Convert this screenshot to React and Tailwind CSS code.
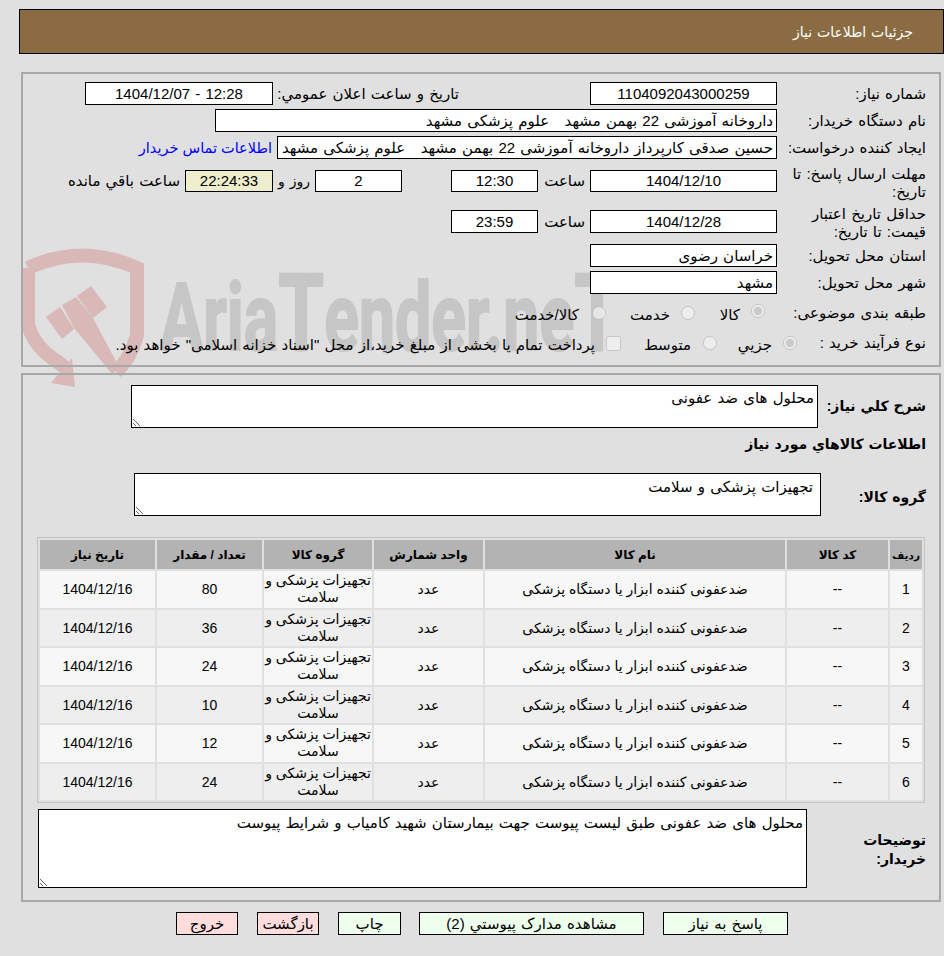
const FONT = "font-['Liberation_Sans','DejaVu_Sans',sans-serif]"

const ROWS = [
  { id: 1, qty: 80 },
  { id: 2, qty: 36 },
  { id: 3, qty: 24 },
  { id: 4, qty: 10 },
  { id: 5, qty: 12 },
  { id: 6, qty: 24 },
]

const COLS = [
  { label: 'ردیف', width: 'w-[32px] text-[10.5px]' },
  { label: 'کد کالا', width: 'w-[101px]' },
  { label: 'نام کالا', width: 'w-[300px]' },
  { label: 'واحد شمارش', width: 'w-[109px]' },
  { label: 'گروه کالا', width: 'w-[108px]' },
  { label: 'تعداد / مقدار', width: 'w-[105px]' },
  { label: 'تاریخ نیاز', width: 'w-[115px]' },
]

function Box({ children, className = 'h-[23px]', bg = 'bg-white', ltr = false }) {
  return (
    <div
      dir={ltr ? 'ltr' : 'rtl'}
      className={`flex shrink-0 items-center overflow-hidden whitespace-pre border border-black px-[3px] ${bg} ${ltr ? 'justify-center' : ''} ${className}`}
    >
      {children}
    </div>
  )
}

function Label({ children, className = 'w-[149px]' }) {
  return <div className={`shrink-0 ${className}`}>{children}</div>
}

function Radio({ checked, name }) {
  return <input type="radio" name={name} checked={checked} disabled readOnly className="m-0 h-[14px] w-[14px] shrink-0" />
}

function Watermark() {
  return (
    <svg className="pointer-events-none absolute left-0 top-[240px] h-[160px] w-[640px] [direction:ltr]" viewBox="0 0 640 160" aria-hidden="true">
      <g fill="none" stroke="#d9b8b8" strokeWidth="14">
        <path d="M28 28 Q 82 3 137 28 L137 95 Q 131 118 116 132" />
        <path d="M28 28 L28 85 Q 35 108 58 122 L 68 130" />
      </g>
      <g fill="#d9b8b8">
        <path d="M51 143 L75 147 L72 118 Z" />
        <path d="M46 77 L60 67 L74 89 L62 99 Z" />
        <path d="M77 56 L91 46 L107 67 L93 78 Z" />
        <path d="M62 65 L76 57 L93 78 L118 125 L113 135 L74 88 Z" />
      </g>
      <text
        x="160"
        y="110"
        textLength="460"
        lengthAdjust="spacingAndGlyphs"
        fontFamily="Roboto, sans-serif"
        fontWeight="700"
        fontSize="94"
        fill="#c6c6c6"
        stroke="#c6c6c6"
        strokeWidth="2"
      >
        Aria<tspan fontSize="108">T</tspan>ender.ne<tspan fontSize="108">T</tspan>
      </text>
    </svg>
  )
}

export default function App() {
  return (
    <div dir="rtl" className={`relative h-[956px] w-[944px] overflow-hidden bg-[#e0e0e0] text-[15px] leading-[18px] text-black [word-spacing:1px] ${FONT}`}>
      <Watermark />

      <div className="ml-[19px] mt-[9px] flex h-[45px] items-center border border-black bg-[#8b6c42] pr-[30px] text-[14px] text-white">
        جزئیات اطلاعات نیاز
      </div>

      <section className="relative z-10 ml-[21px] mr-[3px] mt-[18px] h-[295px] border-2 border-[#a8a8a8] pr-[13px] pt-[8px]">
        <div className="flex h-[27px] items-start">
          <Label><span className="leading-[24px]">شماره نیاز:</span></Label>
          <Box ltr className="h-[23px] w-[187px]">1104092043000259</Box>
          <div className="mr-[131px] w-[186px] shrink-0 whitespace-nowrap leading-[24px]">تاريخ و ساعت اعلان عمومي:</div>
          <Box ltr className="h-[23px] w-[188px]">1404/12/07 - 12:28</Box>
        </div>
        <div className="flex h-[27px] items-start">
          <Label><span className="leading-[24px]">نام دستگاه خریدار:</span></Label>
          <Box className="h-[23px] w-[562px]">داروخانه آموزشی 22 بهمن مشهد   علوم پزشکی مشهد</Box>
        </div>
        <div className="flex h-[34px] items-start">
          <Label><span className="leading-[24px]">ایجاد کننده درخواست:</span></Label>
          <Box className="h-[23px] w-[500px]">حسین صدقی کارپرداز داروخانه آموزشی 22 بهمن مشهد   علوم پزشکی مشهد</Box>
          <a className="mr-[5px] whitespace-nowrap text-[14.5px] leading-[24px] text-[#0000ff] [word-spacing:0]">اطلاعات تماس خریدار</a>
        </div>
        <div className="flex h-[40px] items-start">
          <Label className="-mt-[5px] w-[149px]">مهلت ارسال پاسخ: تا تاریخ:</Label>
          <Box ltr className="h-[22px] w-[187px]">1404/12/10</Box>
          <div className="w-[52px] pr-[5px] leading-[22px]">ساعت</div>
          <Box ltr className="h-[22px] w-[87px]">12:30</Box>
          <div className="w-[49px]" />
          <Box ltr className="h-[22px] w-[87px]">2</Box>
          <div className="w-[42px] whitespace-nowrap pr-[5px] text-[14px] leading-[22px]">روز و</div>
          <Box ltr bg="bg-[#eeeecc]" className="h-[22px] w-[88px]">22:24:33</Box>
          <div className="whitespace-nowrap pr-[5px] leading-[22px]">ساعت باقي مانده</div>
        </div>
        <div className="flex h-[34px] items-start">
          <Label className="-mt-[5px] w-[149px]">حداقل تاریخ اعتبار قیمت: تا تاریخ:</Label>
          <Box ltr className="h-[23px] w-[187px]">1404/12/28</Box>
          <div className="w-[52px] pr-[5px] leading-[23px]">ساعت</div>
          <Box ltr className="h-[23px] w-[87px]">23:59</Box>
        </div>
        <div className="flex h-[27px] items-start">
          <Label><span className="leading-[24px]">استان محل تحویل:</span></Label>
          <Box className="h-[23px] w-[187px]">خراسان رضوی</Box>
        </div>
        <div className="flex h-[27px] items-start">
          <Label><span className="leading-[24px]">شهر محل تحویل:</span></Label>
          <Box className="h-[23px] w-[187px]">مشهد</Box>
        </div>
        <div className="flex h-[30px] items-center">
          <Label>طبقه بندی موضوعی:</Label>
          <div className="mr-[12px]"><Radio name="kind" checked /></div>
          <span className="mr-[11px] w-[45px] pt-[4px]">کالا</span>
          <Radio name="kind" />
          <span className="mr-[11px] w-[64px] pt-[4px]">خدمت</span>
          <Radio name="kind" />
          <span className="mr-[13px] pt-[4px]">کالا/خدمت</span>
        </div>
        <div className="flex h-[30px] items-center">
          <Label className="w-[129px]">نوع فرآیند خرید :</Label>
          <Radio name="process" checked />
          <span className="mr-[11px] w-[55px] pt-[4px]">جزیي</span>
          <Radio name="process" />
          <span className="mr-[12px] w-[70px] pt-[4px]">متوسط</span>
          <input type="checkbox" disabled className="m-0 h-[15px] w-[15px] shrink-0" />
          <span className="mr-[11px] whitespace-nowrap pt-[4px]">پرداخت تمام یا بخشی از مبلغ خرید،از محل "اسناد خزانه اسلامی" خواهد بود.</span>
        </div>
      </section>

      <section className="relative z-10 ml-[21px] mr-[3px] mt-[6px] h-[529px] border-2 border-[#a8a8a8] pr-[13px] pt-[10px] text-[14px]">
        <div className="flex h-[48px] items-start">
          <div className="w-[108px] shrink-0 pt-[12px] font-bold">شرح كلي نیاز:</div>
          <textarea readOnly className="h-[43px] w-[687px] resize-y border border-black bg-white px-[3px] py-[3px] text-[15px] outline-none [word-spacing:1px]" value="محلول های ضد عفونی" />
        </div>
        <div className="h-[40px] pt-[2px] font-bold">اطلاعات کالاهاي مورد نیاز</div>
        <div className="flex h-[64px] items-start">
          <div className="w-[105px] shrink-0 pt-[15px] font-bold">گروه کالا:</div>
          <textarea readOnly className="h-[43px] w-[687px] resize-y border border-black bg-white px-[7px] py-[4px] text-[15px] outline-none [word-spacing:1px]" value="تجهیزات پزشکی و سلامت" />
        </div>
        <table className="mr-[1px] h-[266px] w-[888px] table-fixed border-separate border-spacing-[2px] border border-[#c4c4c4] text-center [word-spacing:0]">
          <thead>
            <tr className="h-[29px] bg-[#b3b3b3] text-[12px] font-bold">
              {COLS.map((c) => <th key={c.label} className={`${c.width} whitespace-nowrap p-0`}>{c.label}</th>)}
            </tr>
          </thead>
          <tbody>
            {ROWS.map((r) => (
              <tr key={r.id} className={r.id % 2 ? 'bg-[#f7f7f7]' : 'bg-[#eeeeee]'}>
                <td className="p-0">{r.id}</td>
                <td className="p-0">--</td>
                <td className="p-0">ضدعفونی کننده ابزار یا دستگاه پزشکی</td>
                <td className="p-0">عدد</td>
                <td className="p-0 leading-[17px]">تجهیزات پزشکی و سلامت</td>
                <td className="p-0">{r.qty}</td>
                <td className="p-0">1404/12/16</td>
              </tr>
            ))}
          </tbody>
        </table>
        <div className="mt-[6px] flex items-start">
          <div className="ml-[29px] w-[90px] shrink-0 pt-[22px] font-bold leading-[19px]">توضیحات خریدار:</div>
          <textarea readOnly className="h-[79px] w-[769px] resize-y border border-black bg-white px-[3px] py-[4px] text-[15px] outline-none [word-spacing:1px]" value="محلول های ضد عفونی طبق لیست پیوست جهت بیمارستان شهید کامیاب و شرایط پیوست" />
        </div>
      </section>

      <div className="mt-[10px] flex pr-[156px] [&>button]:[word-spacing:1px]">
        <button className="h-[23px] w-[125px] border border-black bg-[#eeffee]">پاسخ به نیاز</button>
        <button className="mr-[19px] h-[23px] w-[225px] border border-black bg-[#eeffee]">مشاهده مدارک پیوستي (2)</button>
        <button className="mr-[18px] h-[23px] w-[63px] border border-black bg-[#eeffee]">چاپ</button>
        <button className="mr-[19px] h-[23px] w-[62px] border border-black bg-[#ffdddd]">بازگشت</button>
        <button className="mr-[19px] h-[23px] w-[62px] border border-black bg-[#ffdddd]">خروج</button>
      </div>
    </div>
  )
}
